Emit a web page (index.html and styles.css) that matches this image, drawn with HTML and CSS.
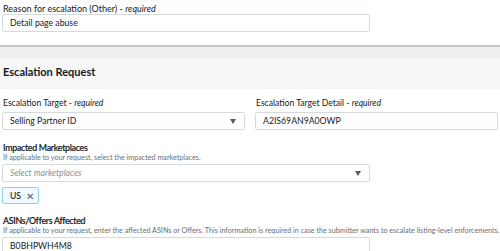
FILE: index.html
```html
<!DOCTYPE html>
<html>
<head>
<meta charset="utf-8">
<link rel="stylesheet" href="styles.css">
<title>Escalation</title>
</head>
<body>
<div class="field top">
  <label class="lbl">Reason for escalation (Other) - <i>required</i></label>
  <div class="input half">Detail page abuse</div>
</div>

<div class="section">
  <div class="band"></div>
  <h2 class="section-title">Escalation Request</h2>
</div>

<div class="row">
  <div class="field">
    <label class="lbl">Escalation Target - <i>required</i></label>
    <div class="input select">Selling Partner ID<span class="caret"></span></div>
  </div>
  <div class="field">
    <label class="lbl">Escalation Target Detail - <i>required</i></label>
    <div class="input">A2IS69AN9A0OWP</div>
  </div>
</div>

<div class="field">
  <label class="lbl strong">Impacted Marketplaces</label>
  <div class="hint">If applicable to your request, select the impacted marketplaces.</div>
  <div class="input half select placeholder">Select marketplaces<span class="caret"></span></div>
  <div class="tokens"><span class="token">US <span class="x">&#x2715;</span></span></div>
</div>

<div class="field">
  <label class="lbl strong">ASINs/Offers Affected</label>
  <div class="hint">If applicable to your request, enter the affected ASINs or Offers. This information is required in case the submitter wants to escalate listing-level enforcements.</div>
  <div class="input half">B0BHPWH4M8</div>
</div>
</body>
</html>
```

FILE: styles.css
```css
html { overflow: hidden; }

body {
  margin: 0;
  width: 500px;
  color: #16191f;
  font-family: Lato, "Open Sans", "Liberation Sans", sans-serif;
  font-size: 9px;
  background: #fff;
}

.field { padding: 0 3px 0 2px; }
.field.top { padding-top: 3px; }

.lbl {
  display: block;
  font-size: 9px;
  line-height: 11px;
  padding-left: 1px;
}
.lbl i { font-style: italic; }
.row .lbl { font-size: 8.6px; margin-bottom: 3px; }
.lbl.strong {
  font-size: 8.9px;
  font-weight: 500;
  letter-spacing: -0.3px;
  margin-top: 12px;
  line-height: 11px;
  -webkit-text-stroke: 0.2px #16191f;
}

.hint {
  color: #687078;
  font-size: 7.2px;
  line-height: 9px;
  padding-left: 1px;
  margin-bottom: 2px;
  white-space: nowrap;
}

.input {
  position: relative;
  box-sizing: border-box;
  height: 18px;
  border: 1px solid #d5dbdb;
  border-radius: 2px;
  padding: 0 7px;
  font-size: 8.7px;
  line-height: 16px;
  background: #fff;
}
.half { width: 368px; }
.placeholder { color: #879596; font-style: italic; }

.caret {
  position: absolute;
  right: 8px;
  top: 6px;
  width: 0;
  height: 0;
  border-left: 3.5px solid transparent;
  border-right: 3.5px solid transparent;
  border-top: 5px solid #545b64;
}

.section {
  margin-top: 13px;
  border-top: 2px solid #c4c8c8;
  background: #f7f7f7;
}
.band { height: 11px; background: #eef0f0; }
.section-title {
  margin: 0;
  padding: 7px 3px 0 3px;
  height: 31px;
  box-sizing: border-box;
  font-size: 11px;
  font-weight: 700;
  line-height: 14px;
}

.row {
  display: grid;
  grid-template-columns: 243px 243px;
  column-gap: 10px;
  padding: 9px 3px 0 2px;
}
.row .field { padding: 0; }

.tokens { margin-top: 5px; height: 17px; margin-bottom: -1px; }
.token {
  display: inline-flex;
  align-items: center;
  gap: 5px;
  box-sizing: border-box;
  height: 17px;
  padding: 0 4px 0 7px;
  border: 1px solid #8fd0e8;
  border-radius: 2px;
  background: #f1faff;
  font-size: 8.6px;
  font-weight: 500;
}
.token .x { font-size: 10px; color: #545b64; font-weight: 400; }
```
